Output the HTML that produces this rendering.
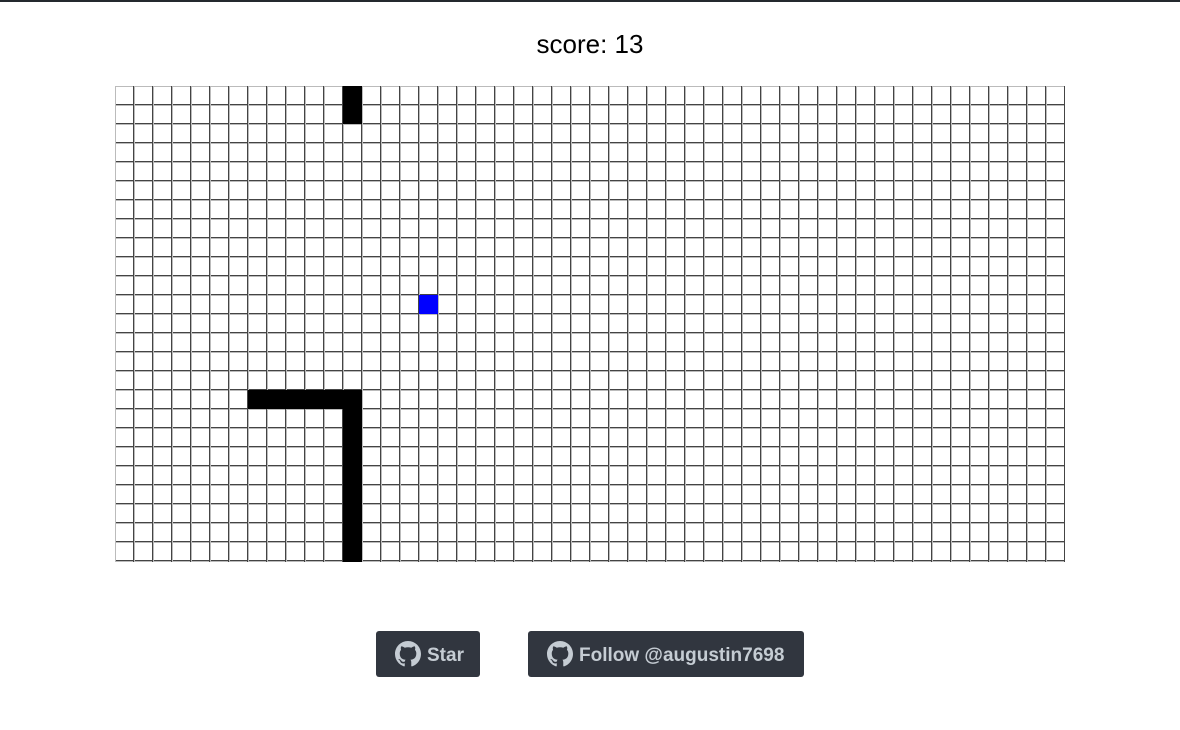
<!DOCTYPE html>
<html><head><style>
body{margin:0;width:1180px;height:730px;background:#fff;position:relative;overflow:hidden;font-family:"Liberation Sans",sans-serif}
.top{position:absolute;left:0;top:0;width:1180px;height:2px;background:#24292e}
.score{position:absolute;top:29px;left:0;width:1180px;text-align:center;font-size:26px;color:#000}
.grid{position:absolute;left:115px;top:86px;width:950px;height:476px;
background:
repeating-linear-gradient(to right,#bbb 0,#bbb 1px,transparent 1px,transparent 18px,#444 18px,#444 19px),
repeating-linear-gradient(to bottom,#bbb 0,#bbb 1px,transparent 1px,transparent 18px,#444 18px,#444 19px),#fff}
.c{position:absolute;background:#000}
.btn{position:absolute;top:631px;height:46px;background:#31363f;border-radius:3px;color:#c5ccd3;font-weight:bold;font-size:19px;display:flex;align-items:center;box-sizing:border-box;padding-left:19px;padding-top:4px}
.btn svg{margin-right:6px;margin-top:-4px}
</style></head><body>
<div class="top"></div>
<div class="score">score: 13</div>
<div class="grid">
<div class="c" style="left:228px;top:0;width:19px;height:38px"></div>
<div class="c" style="left:133px;top:304px;width:114px;height:19px"></div>
<div class="c" style="left:228px;top:304px;width:19px;height:172px"></div>
<div class="c" style="left:304px;top:209px;width:19px;height:19px;background:#00f"></div>
</div>
<div class="btn" style="left:376px;width:104px"><svg width="26" height="26" viewBox="0 0 16 16"><path fill="#c5ccd3" d="M8 0C3.58 0 0 3.58 0 8c0 3.54 2.29 6.53 5.47 7.59.4.07.55-.17.55-.38 0-.19-.01-.82-.01-1.49-2.01.37-2.53-.49-2.69-.94-.09-.23-.48-.94-.82-1.130-.28-.15-.68-.52-.01-.53.63-.01 1.08.58 1.23.82.72 1.21 1.87.87 2.33.66.07-.52.28-.87.51-1.07-1.78-.2-3.64-.89-3.64-3.95 0-.87.31-1.59.82-2.15-.08-.2-.36-1.02.08-2.12 0 0 .67-.21 2.2.82.64-.18 1.32-.27 2-.27.68 0 1.36.09 2 .27 1.53-1.04 2.2-.82 2.2-.82.44 1.1.16 1.92.08 2.12.51.56.82 1.27.82 2.15 0 3.07-1.87 3.75-3.65 3.95.29.25.54.73.54 1.48 0 1.07-.01 1.93-.01 2.2 0 .21.15.46.55.38A8.013 8.013 0 0016 8c0-4.42-3.58-8-8-8z"/></svg>Star</div>
<div class="btn" style="left:528px;width:276px"><svg width="26" height="26" viewBox="0 0 16 16"><path fill="#c5ccd3" d="M8 0C3.58 0 0 3.58 0 8c0 3.54 2.29 6.53 5.47 7.59.4.07.55-.17.55-.38 0-.19-.01-.82-.01-1.49-2.01.37-2.53-.49-2.69-.94-.09-.23-.48-.94-.82-1.13-.28-.15-.68-.52-.01-.53.63-.01 1.08.58 1.23.82.72 1.21 1.87.87 2.33.66.07-.52.28-.87.51-1.07-1.78-.2-3.64-.89-3.64-3.95 0-.87.31-1.59.82-2.15-.08-.2-.36-1.02.08-2.12 0 0 .67-.21 2.2.82.64-.18 1.32-.27 2-.27.68 0 1.36.09 2 .27 1.53-1.04 2.2-.82 2.2-.82.44 1.1.16 1.92.08 2.12.51.56.82 1.27.82 2.15 0 3.07-1.87 3.75-3.65 3.95.29.25.54.73.54 1.48 0 1.07-.01 1.93-.01 2.2 0 .21.15.46.55.38A8.013 8.013 0 0016 8c0-4.42-3.58-8-8-8z"/></svg>Follow @augustin7698</div>
</body></html>
